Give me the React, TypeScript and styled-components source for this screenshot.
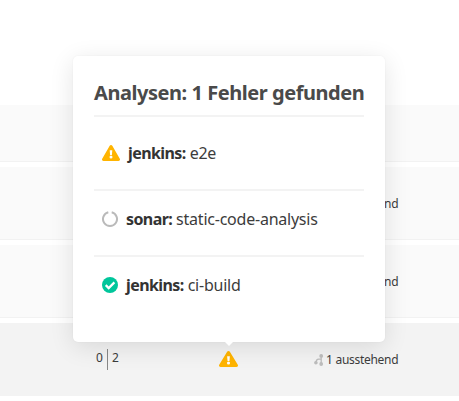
import React from "react";
import styled, { createGlobalStyle } from "styled-components";

const GlobalStyle = createGlobalStyle`
  * { box-sizing: border-box; }
  body { margin: 0; background: #fff; overflow: hidden; }
`;

const Page = styled.main`
  position: relative;
  width: 459px;
  height: 401px;
  padding-top: 105px;
  overflow: hidden;
  font-family: "Noto Sans", "Open Sans", sans-serif;
  color: #3c3c3c;
`;

const List = styled.div`
  display: flex;
  flex-direction: column;
  gap: 5px;
`;

const Row = styled.div<{ $height?: number; $active?: boolean }>`
  display: grid;
  grid-template-columns: 96px 123px 95px 1fr;
  align-items: center;
  height: ${(p) => p.$height ?? 73}px;
  background: ${(p) => (p.$active ? "#f3f3f3" : "#fafafa")};
  border-bottom: 1px solid ${(p) => (p.$active ? "#f3f3f3" : "#f2f2f2")};
`;

const Counts = styled.div`
  grid-column: 2;
  display: flex;
  align-items: flex-start;
  height: 21px;
  font-size: 12px;
  line-height: 18px;
`;

const Divider = styled.span`
  width: 1px;
  height: 21px;
  margin: 0 4px;
  background: #888;
`;

const StatusCell = styled.div`
  grid-column: 3;
  display: flex;
`;

const Pending = styled.div`
  grid-column: 4;
  display: flex;
  align-items: center;
  gap: 2px;
  padding-top: 1px;
  font-size: 12px;
  line-height: 19px;
  letter-spacing: -0.28px;
  white-space: nowrap;
`;

const Popover = styled.section`
  position: absolute;
  left: 73px;
  top: 56px;
  width: 312px;
  height: 286px;
  padding: 21px;
  background: #fff;
  border-radius: 5px;
  box-shadow: 0 5px 24px rgba(0, 0, 0, 0.11), 0 0 2px rgba(0, 0, 0, 0.05);

  &::after {
    content: "";
    position: absolute;
    left: 152px;
    top: 286px;
    border: 4px solid transparent;
    border-top-color: #fff;
    border-bottom: 0;
  }
`;

const Title = styled.h2`
  height: 40px;
  margin: 0;
  border-bottom: 2px solid #f3f3f3;
  font-size: 20px;
  line-height: 31px;
  font-weight: 700;
  letter-spacing: -0.45px;
  white-space: nowrap;
  color: #4a4a4a;
`;

const Analysis = styled.div<{ $first?: boolean; $last?: boolean }>`
  display: flex;
  align-items: center;
  gap: 8px;
  height: ${(p) => (p.$first ? 74 : p.$last ? 64 : 66)}px;
  padding: 0 0 ${(p) => (p.$first ? 0 : 8)}px 8px;
  border-bottom: ${(p) => (p.$last ? 0 : 2)}px solid #f3f3f3;
  font-size: 16px;
  line-height: 24px;
  white-space: nowrap;
`;

const Label = styled.span`
  letter-spacing: -0.23px;
`;

const Tool = styled.strong`
  font-weight: 700;
  letter-spacing: -0.58px;
  color: #333;
`;

const Icon = styled.svg`
  display: block;
  flex: none;
`;

const Warning = ({ size = 18 }: { size?: number }) => (
  <Icon width={size} height={16} viewBox="0 0 18 16" preserveAspectRatio="none">
    <path d="M7.7.8a1.5 1.5 0 0 1 2.6 0l7.5 13a1.5 1.5 0 0 1-1.3 2.2h-15a1.5 1.5 0 0 1-1.3-2.2z" fill="#ffb400" />
    <path d="M7.7 5.2h2.6l-.4 4.7H8.1z" fill="#fff" />
    <circle cx="9" cy="12.1" r="1.5" fill="#fff" />
  </Icon>
);

const Running = () => (
  <Icon width="16" height="16" viewBox="0 0 16 16">
    <path d="M9.7 1.2A7 7 0 1 1 6.3 1.2" fill="none" stroke="#bababa" strokeWidth="2" />
  </Icon>
);

const Success = () => (
  <Icon width="16" height="16" viewBox="0 0 16 16">
    <circle cx="8" cy="8" r="8" fill="#00c69b" />
    <path d="m3.7 8.1 3 3L12.4 5.4" fill="none" stroke="#fff" strokeWidth="2.2" />
  </Icon>
);

const Branch = () => (
  <Icon width="10" height="12" viewBox="0 0 10 12">
    <path d="M7.2 2v8M7.2 5.1H4.6Q2.2 5.1 2 8.5" fill="none" stroke="#bdbdbd" strokeWidth="1.3" />
    <circle cx="7.2" cy="1.9" r="1.9" fill="#bdbdbd" />
    <circle cx="7.2" cy="10" r="1.9" fill="#bdbdbd" />
    <circle cx="1.9" cy="8.7" r="1.8" fill="#bdbdbd" />
  </Icon>
);

const PendingCell = () => (
  <Pending>
    <Branch />
    <span>1 ausstehend</span>
  </Pending>
);

export default function App() {
  return (
    <Page>
      <GlobalStyle />
      <List>
        <Row $height={57} />
        <Row><PendingCell /></Row>
        <Row><PendingCell /></Row>
        <Row $active>
          <Counts><span>0</span><Divider /><span>2</span></Counts>
          <StatusCell><Warning size={19} /></StatusCell>
          <PendingCell />
        </Row>
      </List>
      <Popover>
        <Title>Analysen: 1 Fehler gefunden</Title>
        <Analysis $first>
          <Warning />
          <Label><Tool>jenkins:</Tool> e2e</Label>
        </Analysis>
        <Analysis>
          <Running />
          <Label><Tool>sonar:</Tool> static-code-analysis</Label>
        </Analysis>
        <Analysis $last>
          <Success />
          <Label><Tool>jenkins:</Tool> ci-build</Label>
        </Analysis>
      </Popover>
    </Page>
  );
}
